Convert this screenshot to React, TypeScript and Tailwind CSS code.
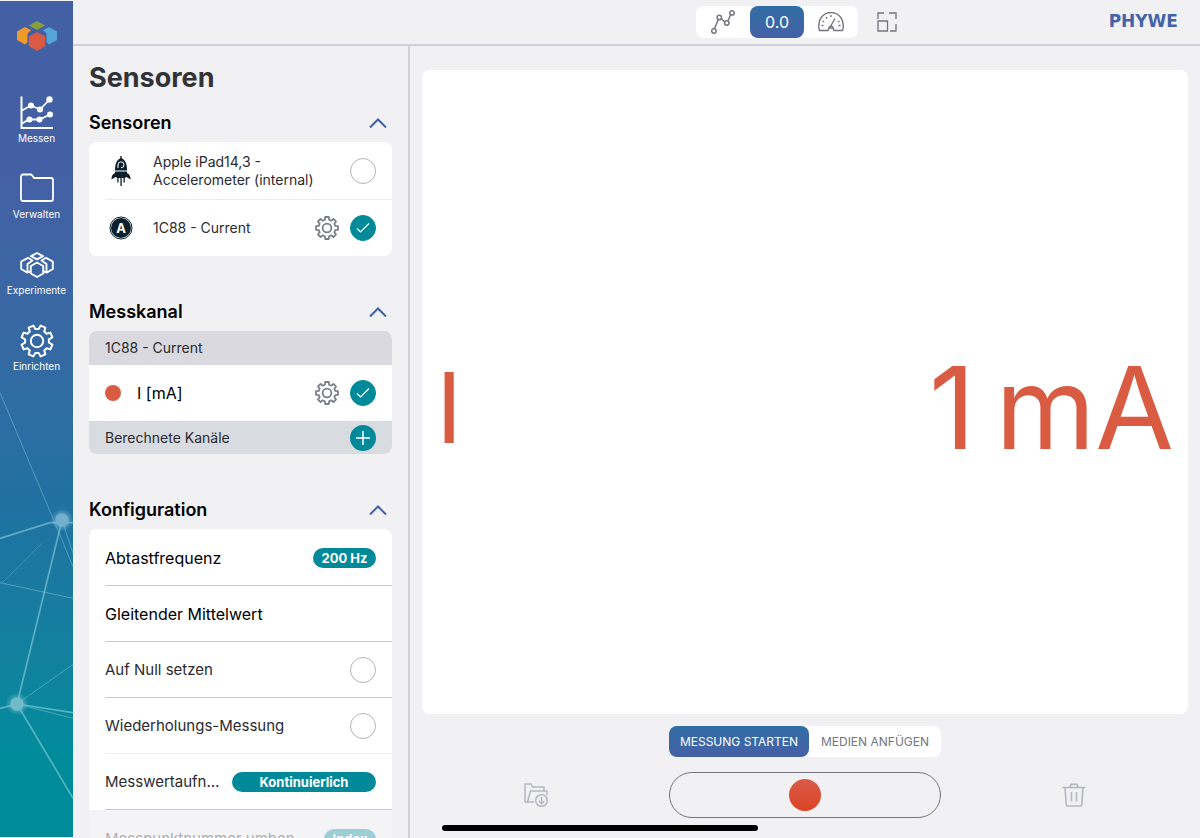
import React, { useState } from "react";
import clsx from "clsx";

const gearPath = (outer: number, inner: number, offset: number) => {
  const points: string[] = [];
  for (let i = 0; i < 8; i++) {
    const mid = offset + i * 45;
    [
      [-14.5, inner],
      [-9.5, outer],
      [9.5, outer],
      [14.5, inner],
    ].forEach(([deg, r]) => {
      const a = ((mid + deg) * Math.PI) / 180;
      points.push(`${(17 + r * Math.sin(a)).toFixed(2)} ${(17 - r * Math.cos(a)).toFixed(2)}`);
    });
  }
  return `M${points.join("L")}Z`;
};

const GearIcon = ({ className, offset = 0, stroke = 2 }: { className?: string; offset?: number; stroke?: number }) => (
  <svg viewBox="0 0 34 34" className={className} fill="none" stroke="currentColor" strokeWidth={stroke} strokeLinejoin="round">
    <path d={gearPath(15.8, 12, offset)} />
    <circle cx="17" cy="17" r="6.2" />
  </svg>
);

const LogoIcon = () => (
  <svg viewBox="0 0 40 30" className="h-[30px] w-10">
    <path d="M20 0l8 4.5-8 4.5-8-4.5z" fill="#86a13a" />
    <path d="M8 6l6 3.2-3.5 3.3v8.500L8 23.500l-8-4.500V10.500z" fill="#f09a2a" />
    <path d="M32 6l-6 3.200 3.500 3.300v8.500L32 23.500l8-4.500V10.500z" fill="#56a5d9" />
    <path d="M20 11l8.200 4.600v9.300L20 30l-8.200-5.100v-9.300z" fill="#d95b43" />
  </svg>
);

const MeasureIcon = () => (
  <svg viewBox="0 0 34 34" className="size-[34px]" fill="none" stroke="currentColor" strokeWidth="2">
    <path d="M1.500 0.500V32H33" />
    <path d="M2 14.500L11 9.500L20 13.500L29.500 3.500" strokeWidth="1.800" />
    <path d="M2 27.500L9 23.500H19.500L30 18.500" strokeWidth="1.800" />
    <g fill="currentColor" stroke="none">
      <circle cx="11" cy="9.500" r="3" />
      <circle cx="20" cy="13.500" r="3" />
      <circle cx="29.500" cy="3.500" r="3.200" />
      <circle cx="9.500" cy="23.500" r="3" />
      <circle cx="19.500" cy="23.500" r="3" />
      <circle cx="30" cy="18.500" r="3" />
    </g>
  </svg>
);

const FolderIcon = () => (
  <svg viewBox="0 0 34 34" className="size-[34px]" fill="none" stroke="currentColor" strokeWidth="1.800" strokeLinejoin="round">
    <path d="M1 4.500a2 2 0 0 1 2-2h8.500l2.500 3.500h17a2 2 0 0 1 2 2V27a2 2 0 0 1-2 2H3a2 2 0 0 1-2-2z" />
  </svg>
);

const ExperimentsIcon = () => (
  <svg viewBox="0 0 34 34" className="size-[34px]" fill="none" stroke="currentColor" strokeWidth="1.900" strokeLinejoin="round">
    <path d="M17 14.500l6.200 3.500v7.500L17 29l-6.200-3.500V18z" />
    <path d="M11 8.200L17 5l6 3.200L17 11.300z" />
    <path d="M10.500 23.500L7 24.500 1.200 21v-7.500L8 9.800l4.500 2.700L7.500 16v8" />
    <path d="M23.500 23.500L27 24.500 32.800 21v-7.500L26 9.800l-4.500 2.700L26.500 16v8" />
  </svg>
);

const RocketIcon = () => (
  <svg viewBox="0 0 20 30" className="h-[30px] w-5 text-[#0b1f2d]" fill="currentColor">
    <path d="M9.300 0h1.400v3h-1.400z" />
    <path d="M10 2c4 1.500 6 5 6 12.500H4C4 7 6 3.500 10 2z" />
    <path d="M4 15.500h12v1.500c2.500 1.200 3.700 3.500 3.500 6.500L15.500 21l-2 1h-7l-2-1L0.500 23.500C0.300 20.500 1.500 18.200 4 17z" />
    <path d="M6.300 21h1.300v5.500H6.300zM9.400 21h1.300v9H9.400zM12.500 21h1.300v5.500h-1.300z" />
    <path d="M7 12V9a3 3 0 1 1 3 2.800" fill="none" stroke="#fff" strokeWidth="1" />
  </svg>
);

const AmpereIcon = () => (
  <svg viewBox="0 0 24 24" className="size-6">
    <circle cx="12" cy="12" r="11" fill="none" stroke="#0b1f2d" />
    <circle cx="12" cy="12" r="10" fill="#0b1f2d" />
    <text x="12" y="16.500" textAnchor="middle" fontFamily="Inter, sans-serif" fontSize="13" fontWeight="700" fill="#fff">
      A
    </text>
  </svg>
);

const NetworkLines = () => (
  <svg viewBox="0 0 219 1371" className="absolute bottom-0 left-0 h-[457px] w-[73px]" stroke="#8fd0dc" fill="none" aria-hidden="true">
    <defs>
      <radialGradient id="glow">
        <stop offset="0.500" stopColor="#8cc4da" stopOpacity="0.500" />
        <stop offset="1" stopColor="#8cc4da" stopOpacity="0" />
      </radialGradient>
    </defs>
    <g strokeWidth="3" strokeOpacity="0.450">
      <path d="M0 38L165 430L219 560M0 608L219 655M51 972L219 853M51 972L219 1015M186 420L219 520" />
      <path d="M5 610L125 490" strokeOpacity="0.250" />
    </g>
    <g strokeWidth="5" strokeOpacity="0.600">
      <path d="M0 475L150 428L219 428M186 420L51 972M0 985L51 972L219 998M51 972L219 1255" />
    </g>
    <g stroke="none">
      <circle cx="186" cy="420" r="34" fill="url(#glow)" />
      <circle cx="51" cy="972" r="34" fill="url(#glow)" />
      <circle cx="186" cy="420" r="20" fill="#74b0cd" />
      <circle cx="51" cy="972" r="20" fill="#6fbccb" />
    </g>
  </svg>
);

const GraphIcon = () => (
  <svg viewBox="0 0 24 24" className="size-6" fill="none" stroke="currentColor" strokeWidth="1.500">
    <path d="M3.500 18.500L7.500 9M10.500 9.200L14 12M16.800 11L20 4" />
    <circle cx="2.900" cy="21" r="2.200" />
    <circle cx="8.300" cy="7.500" r="2.200" />
    <circle cx="15.800" cy="13" r="2.200" />
    <circle cx="21" cy="2.900" r="2.200" />
  </svg>
);

const GaugeIcon = () => (
  <svg viewBox="0 0 26 20" className="h-5 w-[26px]" fill="none" stroke="currentColor" strokeWidth="1.400">
    <path d="M1.500 18.500C0.500 16 0.700 13.700 1 12.500a12 12 0 0 1 24 0c0.300 1.200 0.500 3.500-0.500 6h-8.500l-1-2.500h-4l-1 2.500z" />
    <path d="M13 13.500L17 6.500M10.500 16L13 13.500L15.500 16M13 3v2M8 5l1 1.600M4.500 9l1.700 1M3.500 13.500h2M21.500 9l-1.700 1M22.500 13.500h-2" />
  </svg>
);

const ResizeIcon = () => (
  <svg viewBox="0 0 20 20" className="size-5" fill="none" stroke="currentColor" strokeWidth="1.300">
    <path d="M1 7V1h6M12 1h7v6M19 12v7h-6M1 9h9.500v10H1z" />
  </svg>
);

const FolderDownloadIcon = () => (
  <svg viewBox="0 0 24 24" className="size-6" fill="none" stroke="currentColor" strokeWidth="1.500" strokeLinejoin="round">
    <path d="M10 19H1V1h6l1.500 3H20v4M10 8h13v4M3.500 19L6.500 8H10" />
    <circle cx="17.500" cy="17.500" r="5.800" />
    <path d="M17.500 14v6.500M14.800 18l2.700 2.700L20.200 18" />
  </svg>
);

const TrashIcon = () => (
  <svg viewBox="0 0 24 24" className="size-6" fill="none" stroke="currentColor" strokeWidth="1.600">
    <path d="M0.500 4.500h23M8 4.500l1-3.200h6l1 3.200M3 4.500l1.200 17.300a1.300 1.300 0 0 0 1.300 1.200h13a1.300 1.300 0 0 0 1.300-1.200L21 4.500M9.500 9v9.500M14.500 9v9.500" />
  </svg>
);

const navItems = [
  { label: "Messen", icon: <MeasureIcon /> },
  { label: "Verwalten", icon: <FolderIcon /> },
  { label: "Experimente", icon: <ExperimentsIcon /> },
  { label: "Einrichten", icon: <GearIcon className="size-[34px]" offset={22.5} stroke={2} /> },
];

const Check = ({ label, defaultChecked }: { label: string; defaultChecked?: boolean }) => (
  <span className="grid size-[26px] shrink-0 place-items-center">
    <input
      type="checkbox"
      aria-label={label}
      defaultChecked={defaultChecked}
      className="peer col-start-1 row-start-1 size-[26px] appearance-none rounded-full border border-[#b4b4b8] bg-white checked:border-[#008998] checked:bg-[#008998]"
    />
    <svg
      viewBox="0 0 14 12"
      className="pointer-events-none invisible col-start-1 row-start-1 h-3 w-3.5 peer-checked:visible"
      fill="none"
      stroke="#fff"
      strokeWidth="1.200"
    >
      <path d="M1 6.500L4.500 10L13 1.500" />
    </svg>
  </span>
);

const SettingsButton = ({ label }: { label: string }) => (
  <button type="button" aria-label={label} className="mr-[11px] text-[#7a7c86]">
    <GearIcon className="size-6" stroke={2.5} />
  </button>
);

const Section = ({ title, children }: { title: string; children: React.ReactNode }) => {
  const [open, setOpen] = useState(true);
  return (
    <section className="mb-[35px]">
      <h2>
        <button
          type="button"
          aria-expanded={open}
          onClick={() => setOpen(!open)}
          className="flex h-10 w-full items-center justify-between pt-0.5 pr-[5px] text-left text-lg font-semibold text-black"
        >
          {title}
          <svg viewBox="0 0 18 10" className={clsx("h-2.5 w-[18px]", !open && "rotate-180")} fill="none" stroke="#3f5fa6" strokeWidth="2">
            <path d="M1 9.500L9 1.500L17 9.500" />
          </svg>
        </button>
      </h2>
      {open && <div className="overflow-hidden rounded-lg bg-white">{children}</div>}
    </section>
  );
};

const Badge = ({ children, className }: { children: React.ReactNode; className?: string }) => (
  <button
    type="button"
    className={clsx("h-5 shrink-0 rounded-full bg-[#008998] text-[13px] leading-5 font-bold text-white", className)}
  >
    {children}
  </button>
);

const configRow = "ml-4 flex h-14 items-center justify-between gap-3 border-b pr-4 leading-6";

const Tab = ({ active, className, children, ...rest }: React.ComponentProps<"button"> & { active?: boolean }) => (
  <button
    type="button"
    className={clsx(
      "flex items-center justify-center rounded-lg",
      active ? "bg-linear-to-b from-[#2f6da5] to-[#4561a6] text-white" : "text-[#74757f]",
      className,
    )}
    {...rest}
  >
    {children}
  </button>
);

export default function App() {
  return (
    <div className="flex h-screen overflow-hidden bg-[#f1f1f4] font-['Inter',sans-serif] text-[#2b2b30]">
      <aside className="relative my-px w-[73px] shrink-0 overflow-hidden bg-linear-to-b from-[#4460a5] from-20% via-[#2071a2] via-60% to-[#008b9b] to-90%">
        <NetworkLines />
        <div className="relative flex flex-col items-center pt-5">
          <LogoIcon />
          <nav className="mt-[45px] flex flex-col gap-7">
            {navItems.map(({ label, icon }) => (
              <a key={label} href="#" className="flex h-12 flex-col items-center gap-0.5 text-[10px] leading-3 text-white">
                {icon}
                {label}
              </a>
            ))}
          </nav>
        </div>
      </aside>

      <div className="flex min-w-0 flex-1 flex-col">
        <header className="flex h-[46px] shrink-0 border-b-2 border-[#cfcfd7]">
          <div className="w-[337px] shrink-0" />
          <div className="grid flex-1 grid-cols-[1fr_auto_1fr] items-center">
            <div className="col-start-2 flex items-center gap-0.5">
              <div className="flex h-8 rounded-lg bg-white">
                <Tab className="w-[54px]" aria-label="Graph">
                  <GraphIcon />
                </Tab>
                <Tab className="w-[54px] text-base" active>
                  0.0
                </Tab>
                <Tab className="w-[54px]" aria-label="Gauge">
                  <GaugeIcon />
                </Tab>
              </div>
              <button type="button" aria-label="Layout" className="flex h-8 w-[54px] items-center justify-center text-[#74757f]">
                <ResizeIcon />
              </button>
            </div>
            <span className="justify-self-end pr-[22px] font-['DejaVu_Sans',sans-serif] text-[17px] font-bold text-[#4363a8]">PHYWE</span>
          </div>
        </header>

        <div className="flex min-h-0 flex-1">
          <div className="w-[337px] shrink-0 overflow-hidden border-r-2 border-[#cfcfd7] pr-4 pl-4">
            <h1 className="flex h-14 items-center pt-2 text-[27px] font-bold text-[#333336]">Sensoren</h1>

            <Section title="Sensoren">
              <div className="flex h-[57px] items-center pr-4 text-sm leading-[18px]">
                <span className="flex w-16 justify-center">
                  <RocketIcon />
                </span>
                <span className="flex-1">
                  Apple iPad14,3 -<br />
                  Accelerometer (internal)
                </span>
                <Check label="Apple iPad14,3 - Accelerometer (internal)" />
              </div>
              <div className="ml-4 flex h-[57px] items-center border-t border-[#ececef] pr-4 text-sm">
                <span className="flex w-12 pl-1">
                  <AmpereIcon />
                </span>
                <span className="flex-1">1C88 - Current</span>
                <SettingsButton label="1C88 - Current" />
                <Check label="1C88 - Current" defaultChecked />
              </div>
            </Section>

            <Section title="Messkanal">
              <div className="flex h-[34px] items-center bg-[#d9d9df] px-4 text-sm">1C88 - Current</div>
              <div className="flex h-14 items-center px-4 text-base text-black">
                <span className="mr-4 size-4 rounded-full bg-[#d95b41]" />
                <span className="flex-1">I [mA]</span>
                <SettingsButton label="I [mA]" />
                <Check label="I [mA]" defaultChecked />
              </div>
              <div className="flex h-[33px] items-center justify-between bg-[#d8dbdf] px-4 text-sm">
                Berechnete Kanäle
                <button type="button" aria-label="Kanal hinzufügen" className="flex size-[26px] items-center justify-center rounded-full bg-[#008998]">
                  <svg viewBox="0 0 14 14" className="size-3.5" stroke="#fff" strokeWidth="1.500">
                    <path d="M7 0v14M0 7h14" />
                  </svg>
                </button>
              </div>
            </Section>

            <Section title="Konfiguration">
              <div className="pt-px">
                <div className={clsx(configRow, "border-[#c9c9ce] text-[16px] text-black")}>
                  Abtastfrequenz
                  <Badge className="w-[63px]">200 Hz</Badge>
                </div>
                <div className={clsx(configRow, "border-[#c9c9ce] text-[16px] text-black")}>Gleitender Mittelwert</div>
                <div className={clsx(configRow, "border-[#c9c9ce] text-[15px]")}>
                  Auf Null setzen
                  <Check label="Auf Null setzen" />
                </div>
                <div className={clsx(configRow, "border-[#ececef] text-[15px]")}>
                  Wiederholungs-Messung
                  <Check label="Wiederholungs-Messung" />
                </div>
                <div className={clsx(configRow, "border-[#c9c9ce] text-[15px]")}>
                  <span className="truncate">Messwertaufnahme</span>
                  <Badge className="w-36">Kontinuierlich</Badge>
                </div>
                <div className="bg-[#f4f4f7] pt-px">
                  <div className={clsx(configRow, "border-transparent text-[15px] opacity-35")}>
                    <span className="truncate">Messpunktnummer umbenennen</span>
                    <Badge className="w-[52px]">Index</Badge>
                  </div>
                </div>
              </div>
            </Section>
          </div>

          <main className="flex min-w-0 flex-1 flex-col items-center px-3 pt-6 pb-5">
            <div className="flex w-full flex-1 items-center justify-between rounded-lg bg-white px-3.5 pt-8 leading-none text-[#d95b41]">
              <span className="text-[98px]">I</span>
              <span className="flex gap-5 text-[114px]">
                <span>1</span>
                <span>mA</span>
              </span>
            </div>
            <div className="mt-3 flex h-[31px] rounded-lg bg-white text-xs">
              <Tab className="w-[140px]" active>
                MESSUNG STARTEN
              </Tab>
              <Tab className="w-[132px]">MEDIEN ANFÜGEN</Tab>
            </div>
            <div className="mt-[15px] flex items-center justify-center gap-[121px]">
              <button type="button" aria-label="Speichern" className="text-[#b5b6c0]">
                <FolderDownloadIcon />
              </button>
              <button
                type="button"
                aria-label="Messung starten"
                className="flex h-[46px] w-[272px] items-center justify-center rounded-full border border-[#74757f]"
              >
                <span className="size-8 rounded-full bg-linear-to-b from-[#d95b48] to-[#dd4225]" />
              </button>
              <button type="button" aria-label="Löschen" className="text-[#b5b6c0]">
                <TrashIcon />
              </button>
            </div>
          </main>
        </div>
      </div>

      <div className="absolute bottom-[7px] left-1/2 h-1.5 w-[316px] -translate-x-1/2 rounded-full bg-black" />
    </div>
  );
}
